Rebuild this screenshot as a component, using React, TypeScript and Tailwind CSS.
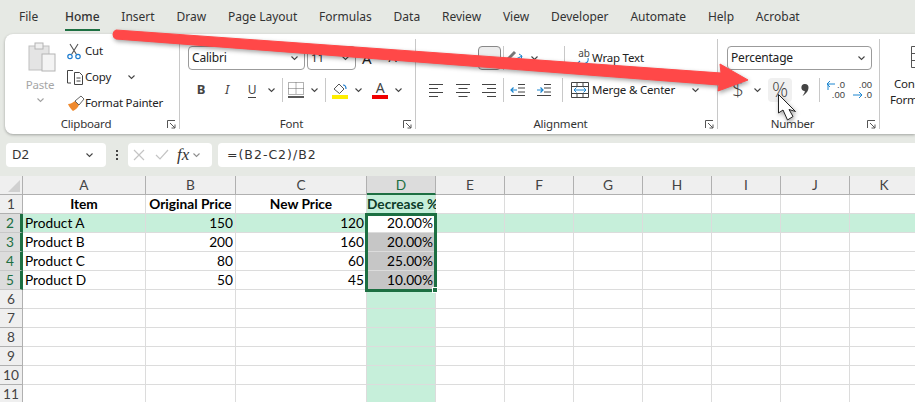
import type { ReactNode } from "react";

const tabs = ["File", "Home", "Insert", "Draw", "Page Layout", "Formulas", "Data", "Review", "View", "Developer", "Automate", "Help", "Acrobat"];
const columns = ["A", "B", "C", "D", "E", "F", "G", "H", "I", "J", "K"];
const rows: string[][] = [
  ["Item", "Original Price", "New Price", "Decrease %"],
  ["Product A", "150", "120", "20.00%"],
  ["Product B", "200", "160", "20.00%"],
  ["Product C", "80", "60", "25.00%"],
  ["Product D", "50", "45", "10.00%"],
  ...Array.from({ length: 6 }, () => ["", "", "", ""]),
];

function Chevron({ className = "" }: { className?: string }) {
  return (
    <svg width="9" height="6" viewBox="0 0 9 6" className={className}>
      <path d="M1.500 1.500 4.500 4.500 7.500 1.500" fill="none" stroke="#444" strokeWidth="1.1" />
    </svg>
  );
}

function Launcher() {
  return (
    <svg width="9" height="9" viewBox="0 0 9 9" className="mr-[3px]">
      <path d="M.5 8V.5H8M3 3l5 5M8 4.500V8H4.500" fill="none" stroke="#555" strokeWidth="1" />
    </svg>
  );
}

function Group({ label, width, children }: { label: string; width: string; children: ReactNode }) {
  return (
    <div className={`my-[5px] flex shrink-0 flex-col border-r border-[#c8c8c8] ${width}`}>
      <div className="min-h-0 flex-1">{children}</div>
      <div className="grid h-[10px] grid-cols-[1fr_auto] items-center leading-[10px] text-[#333]">
        <span className="justify-self-center">{label}</span>
        <Launcher />
      </div>
    </div>
  );
}

function Slot({ w = "w-[26px]", children }: { w?: string; children?: ReactNode }) {
  return <div className={`flex h-[24px] items-center justify-center ${w}`}>{children}</div>;
}

function Sep({ ml }: { ml: string }) {
  return <div className={`h-[24px] w-px bg-[#c8c8c8] ${ml}`} />;
}

function Lines({ kind }: { kind: "left" | "center" | "right" }) {
  const d = {
    left: "M1 1.500h14M1 5.500h9M1 9.500h14M1 13.500h9",
    center: "M1 1.500h14M3.500 5.500h9M1 9.500h14M3.500 13.500h9",
    right: "M1 1.500h14M6 5.500h9M1 9.500h14M6 13.500h9",
  }[kind];
  return (
    <svg width="16" height="15" viewBox="0 0 16 15">
      <path d={d} stroke="#444" strokeWidth="1" />
    </svg>
  );
}

function Indent({ flip }: { flip?: boolean }) {
  return (
    <svg width="16" height="14" viewBox="0 0 16 14">
      <path d="M8 1.500h7M8 5h7M8 9h7M1 12.500h14" stroke="#444" strokeWidth="1" />
      <path d={flip ? "M1 7h6M4.500 4.500 7 7l-2.500 2.500" : "M7 7H1M3.500 4.500 1 7l2.500 2.500"} fill="none" stroke="#1c86d0" strokeWidth="1.2" />
    </svg>
  );
}

// increase / decrease decimal buttons
function Decimal({ top, bottom, arrow, ml }: { top: string; bottom: string; arrow: "left" | "right"; ml: string }) {
  return (
    <div className={`flex w-[19px] flex-col font-['Liberation_Sans',sans-serif] text-[9.5px] leading-[10px] tracking-normal text-[#444] ${ml}`}>
      {arrow === "left" ? (
        <div className="flex items-center justify-between">
          <svg width="9" height="10" viewBox="0 0 9 10">
            <path d="M9 4H1M4 1 1 4l3 3M2 4v6" fill="none" stroke="#1c86d0" strokeWidth="1" />
          </svg>
          <span>{top}</span>
        </div>
      ) : (
        <span className="text-right">{top}</span>
      )}
      {arrow === "right" ? (
        <div className="flex items-center justify-between">
          <svg width="10" height="10" viewBox="0 0 10 10">
            <path d="M0 5h9M6 2l3 3-3 3" fill="none" stroke="#1c86d0" strokeWidth="1" />
          </svg>
          <span>{bottom}</span>
        </div>
      ) : (
        <span className="text-right">{bottom}</span>
      )}
    </div>
  );
}

function ClipboardGroup() {
  return (
    <Group label="Clipboard" width="w-[175px]">
      <div className="-mt-px flex pl-[17px]">
        <div className="flex w-[36px] flex-col items-center pt-[4px] text-[#a6a6a6]">
          <svg width="28" height="30" viewBox="0 0 28 30" className="ml-[3px]">
            <rect x="1" y="4" width="20" height="24" fill="#e4e4e4" stroke="#c0c0c0" />
            <rect x="7" y="1" width="8" height="6" fill="#f0f0f0" stroke="#b4b4b4" />
            <rect x="14" y="12" width="13" height="17" fill="#f4f4f4" stroke="#b4b4b4" />
          </svg>
          <span className="mt-[3px] leading-[20px]">Paste</span>
          <Chevron className="mt-[2px] opacity-50" />
        </div>
        <div className="ml-[9px] flex flex-col">
          <div className="flex h-[26px] items-center">
            <svg width="14" height="17" viewBox="0 0 14 17" className="mr-[4px]">
              <path d="M3 1l6.500 10.500M11 1 4.500 11.500" stroke="#555" strokeWidth="1.1" fill="none" />
              <circle cx="3" cy="13.500" r="2.200" fill="none" stroke="#1c7cd0" strokeWidth="1.2" />
              <circle cx="11" cy="13.500" r="2.200" fill="none" stroke="#1c7cd0" strokeWidth="1.2" />
            </svg>
            <span>Cut</span>
          </div>
          <div className="flex h-[26px] items-center">
            <svg width="18" height="17" viewBox="0 0 18 17" className="-ml-[1px] mr-[1px]">
              <path d="M5 14H1.500V1.500H7M8.500 3.500h5l3 3v9h-8z" fill="#fff" stroke="#444" strokeWidth="1" />
              <path d="M10.500 9h4M10.500 12h4" stroke="#444" />
            </svg>
            <span>Copy</span>
            <Chevron className="ml-[16px]" />
          </div>
          <div className="flex h-[26px] items-center">
            <svg width="18" height="17" viewBox="0 0 18 17">
              <path d="M1 9c3 0 5-2 7-3l4 4c-1 3-4 5-6 6-1-1-4-4-5-7z" fill="#ef8a2f" />
              <path d="M8 6l4 4 5-6-3-3z" fill="#fff" stroke="#555" strokeWidth=".9" />
            </svg>
            <span>Format Painter</span>
          </div>
        </div>
      </div>
    </Group>
  );
}

function FontGroup() {
  return (
    <Group label="Font" width="w-[236px]">
      <div className="pl-[8px] pt-[7px]">
        <div className="flex h-[24px] items-center">
          <div className="flex h-full w-[117px] items-center justify-between rounded-[4px] border border-[#9b9b9b] pl-[3px] pr-[5px] text-[12px]">
            Calibri
            <Chevron />
          </div>
          <div className="ml-[2px] flex h-full w-[49px] items-center justify-between rounded-[4px] border border-[#9b9b9b] pl-[3px] pr-[5px]">
            11
            <Chevron />
          </div>
          <span className="ml-[6px] text-[15px]">A</span>
          <span className="ml-[17px] text-[13px]">A</span>
        </div>
        <div className="mt-[8px] flex items-center">
          <Slot><b className="text-[13px] text-[#444]">B</b></Slot>
          <Slot><i className="text-[13px] text-[#444]">I</i></Slot>
          <Slot w="w-[24px]"><span className="border-b border-[#444] text-[12px] leading-[15px] text-[#444]">U</span></Slot>
          <Slot w="w-[14px]"><Chevron /></Slot>
          <Sep ml="ml-[4px]" />
          <Slot w="w-[24px]">
            <svg width="16" height="16" viewBox="0 0 16 16" className="ml-[2px]">
              <path d="M.5 .5h15v12H.5zM8 .5v12M.5 6.500h15" fill="none" stroke="#666" strokeDasharray="1 1" />
              <path d="M0 15h16" stroke="#222" strokeWidth="1.5" />
            </svg>
          </Slot>
          <Slot w="w-[14px]"><Chevron /></Slot>
          <Sep ml="ml-[4px]" />
          <Slot w="w-[25px]">
            <svg width="16" height="17" viewBox="0 0 16 17" className="ml-[3px]">
              <path d="M2 7l5-5 5 5-4.500 4.500z" fill="#fff" stroke="#555" />
              <path d="M11 3c2 0 3 2 3 4" fill="none" stroke="#1c7cd0" strokeWidth="1.2" />
              <path d="M0 15h16" stroke="#ffee00" strokeWidth="4" />
            </svg>
          </Slot>
          <Slot w="w-[14px]"><Chevron /></Slot>
          <div className="ml-[5px] flex w-[20px] flex-col items-center">
            <span className="text-[14px] leading-[14px] text-[#444]">A</span>
            <div className="h-[4px] w-[16px] bg-[#f00000]" />
          </div>
          <Slot w="w-[16px]"><Chevron /></Slot>
        </div>
      </div>
    </Group>
  );
}

function AlignmentGroup() {
  return (
    <Group label="Alignment" width="w-[302px]">
      <div className="pl-[7px] pt-[7px]">
        <div className="flex items-center">
          <Slot w="w-[26px]"><div className="h-px w-[15px] bg-[#444]" /></Slot>
          <Slot w="w-[27px]"><div className="h-px w-[15px] bg-[#444]" /></Slot>
          <Slot w="w-[26px]"><div className="h-[24px] w-[23px] rounded-[4px] border border-[#888] bg-[#ededed]" /></Slot>
          <Sep ml="ml-[1px]" />
          <Slot w="w-[22px]">
            <svg width="18" height="18" viewBox="0 0 18 18">
              <path d="M2 10 9 3" stroke="#777" strokeWidth="3" fill="none" />
              <path d="M10 10l6-3M13 5l3 2-1 3" stroke="#1c86d0" fill="none" />
            </svg>
          </Slot>
          <Slot w="w-[16px]"><Chevron /></Slot>
          <Sep ml="ml-[22px]" />
          <div className="ml-[7px] flex h-[24px] items-center">
            <div className="-mt-[2px] mr-[2px] flex w-[18px] flex-col items-end">
              <span className="text-[10px] leading-[10px] tracking-normal text-[#444]">ab</span>
              <svg width="18" height="9" viewBox="0 0 18 9">
                <path d="M16 0c1 4-2 6-6 6H5M8 3 5 6l3 3" fill="none" stroke="#1c86d0" strokeWidth="1.1" />
              </svg>
            </div>
            <span>Wrap Text</span>
          </div>
        </div>
        <div className="mt-[8px] flex items-center">
          <Slot w="w-[26px]"><Lines kind="left" /></Slot>
          <Slot w="w-[27px]"><Lines kind="center" /></Slot>
          <Slot w="w-[26px]"><Lines kind="right" /></Slot>
          <Sep ml="ml-[1px]" />
          <Slot w="w-[27px]"><Indent /></Slot>
          <Slot w="w-[26px]"><Indent flip /></Slot>
          <Sep ml="ml-[5px]" />
          <svg width="18" height="16" viewBox="0 0 18 16" className="ml-[8px] mr-[3px]">
            <path d="M.5 .5h17v15H.5zM.5 4.500h17M.5 11.500h17M6 .5v4M12 .5v4M6 11.500v4M12 11.500v4" fill="#fff" stroke="#444" />
            <path d="M3 8h12M5.500 5.500 3 8l2.500 2.500M12.500 5.500 15 8l-2.500 2.500" fill="none" stroke="#1c86d0" />
          </svg>
          <span>Merge &amp; Center</span>
          <Chevron className="ml-[16px]" />
        </div>
      </div>
    </Group>
  );
}

function NumberGroup() {
  return (
    <Group label="Number" width="w-[162px]">
      <div className="pl-[9px] pt-[7px]">
        <div className="flex h-[24px] w-[145px] items-center justify-between rounded-[4px] border border-[#9b9b9b] pl-[3px] pr-[5px] text-[12px]">
          Percentage
          <Chevron />
        </div>
        <div className="mt-[8px] flex items-center">
          <Slot w="w-[22px]"><span className="font-['Open_Sans',sans-serif] text-[21px] font-light text-[#444]">$</span></Slot>
          <Slot w="w-[16px]"><Chevron /></Slot>
          <div className="ml-[3px] flex h-[24px] w-[24px] items-center justify-center rounded-[4px] bg-[#f0f0f0] font-['Open_Sans',sans-serif] text-[20px] font-light tracking-normal text-[#444]">%</div>
          <Slot w="w-[26px]">
            <svg width="8" height="12" viewBox="0 0 8 12">
              <path d="M4 0a3.500 3.500 0 0 1 3.500 3.500C7.500 7 5 10 1.500 12 3 10 3.800 8.500 3.800 7A3.500 3.500 0 0 1 4 0z" fill="#444" />
            </svg>
          </Slot>
          <Sep ml="ml-[1px]" />
          <Decimal top=".0" bottom=".00" arrow="left" ml="ml-[6px]" />
          <Decimal top=".00" bottom=".0" arrow="right" ml="ml-[8px]" />
        </div>
      </div>
    </Group>
  );
}

function Ribbon() {
  return (
    <div className="ml-[5px] flex h-[100px] rounded-l-[8px] bg-white font-['Noto_Sans',sans-serif] text-[11.5px] tracking-[-0.2px] text-[#222] shadow-[0_1px_3px_rgba(0,0,0,0.3)]">
      <ClipboardGroup />
      <FontGroup />
      <AlignmentGroup />
      <NumberGroup />
      <div className="flex flex-col pl-[10px] pt-[12px] leading-[16px] whitespace-nowrap">
        <svg width="20" height="22" viewBox="0 0 20 22" className="mb-[8px] ml-[21px] shrink-0">
          <path d="M.5 .5h19v21H.5zM.5 7.500h19M.5 14.500h19" fill="none" stroke="#555" />
        </svg>
        <span className="pl-[4px]">Conditional</span>
        <span>Formatting</span>
      </div>
    </div>
  );
}

function FormulaBar() {
  return (
    <div className="flex h-[42px] items-center pl-[6px] font-['Noto_Sans',sans-serif]">
      <div className="flex h-[24px] w-[100px] items-center justify-between rounded-[4px] bg-white pl-[6px] pr-[12px] text-[13px] text-[#333]">
        D2
        <Chevron />
      </div>
      <div className="flex w-[22px] flex-col items-center gap-[2px]">
        <div className="size-[2px] bg-[#444]" />
        <div className="size-[2px] bg-[#444]" />
        <div className="size-[2px] bg-[#444]" />
      </div>
      <div className="flex h-[24px] w-[84px] items-center rounded-[4px] bg-white pl-[5px]">
        <svg width="12" height="12" viewBox="0 0 12 12">
          <path d="M1 1l10 10M11 1 1 11" stroke="#c4c4c4" strokeWidth="1.2" />
        </svg>
        <svg width="14" height="12" viewBox="0 0 14 12" className="ml-[10px]">
          <path d="M1 6l4 4 8-9" fill="none" stroke="#c4c4c4" strokeWidth="1.2" />
        </svg>
        <i className="ml-[8px] font-['Liberation_Serif',serif] text-[17px] text-[#333]">fx</i>
        <Chevron className="ml-[3px] opacity-60" />
      </div>
      <div className="ml-[6px] flex h-[24px] flex-1 items-center rounded-l-[4px] bg-white pl-[9px] font-['DejaVu_Sans',sans-serif] text-[12.5px] tracking-[1px] text-[#333]">
        =(B2-C2)/B2
      </div>
    </div>
  );
}

function cellClass(r: number, c: number) {
  if (c === 3 && r === 0) return "bg-[#c6efda] text-[#0c3b28]";
  if (c === 3 && r === 1) return "bg-white";
  if (c === 3 && r >= 2 && r <= 4) return "bg-[#c6c6c6]";
  if (c === 3 || r === 1) return "bg-[#c6efda]";
  return "bg-white";
}

function Sheet() {
  return (
    <div className="relative grid h-[226px] grid-cols-[23px_123px_90px_131px_69px_69px_69px_69px_69px_69px_69px_69px] grid-rows-[repeat(12,19px)] overflow-hidden font-['Lato',sans-serif] text-[13.7px] leading-[18px] text-black">
      <div className="flex items-end justify-end border-r border-b border-[#b0b0b0] bg-[#efefef] p-[2px]">
        <div className="size-0 border-b-[12px] border-l-[12px] border-b-[#d0d0d0] border-l-transparent" />
      </div>
      {columns.map((col, c) => (
        <div
          key={col}
          className={
            c === 3
              ? "border-r border-b-2 border-r-[#b0b0b0] border-b-[#1d6f42] bg-[#dcdcdc] text-center text-[#1d6f42]"
              : "border-r border-b border-[#b0b0b0] bg-[#efefef] text-center text-[#444]"
          }
        >
          {col}
        </div>
      ))}
      {rows.map((row, r) => (
        <div key={r} className="contents">
          <div
            className={
              r >= 1 && r <= 4
                ? "border-r-[3px] border-b border-r-[#1d6f42] border-b-[#c8c8c8] bg-[#dcdcdc] text-center text-[#1d6f42]"
                : "border-r border-b border-[#b0b0b0] bg-[#efefef] text-center text-[#444]"
            }
          >
            {r + 1}
          </div>
          {columns.map((col, c) => {
            const align = r === 0 ? "text-center font-bold" : c === 0 ? "pl-[2px]" : "pr-[2px] text-right";
            return (
              <div key={col} className={`border-r border-b border-[#dcdcdc] whitespace-nowrap ${align} ${cellClass(r, c)}`}>
                {row[c] ?? ""}
              </div>
            );
          })}
        </div>
      ))}
      <div className="pointer-events-none absolute inset-0 col-start-5 col-end-6 row-start-3 row-end-7 -mt-px -mr-px -mb-[2px] -ml-[2px] border-[3px] border-[#1d6f42]">
        <div className="absolute -right-[4px] -bottom-[4px] size-[6px] border border-white bg-[#1d6f42]" />
      </div>
    </div>
  );
}

function Annotations() {
  return (
    <svg width="915" height="402" viewBox="0 0 915 402" className="pointer-events-none absolute inset-0 drop-shadow-[1px_2px_2px_rgba(0,0,0,0.35)]">
      <path
        d="M116 30 721 73 720 64 748 80 718 91 719 85 116 39Q113 38 113 34.500 113 31 116 30Z"
        fill="#ff4848"
        stroke="#ff4848"
        strokeLinejoin="round"
      />
      <path
        d="M778.500 94.500V113L783 110 787.500 120 793 116.500 789 109.500 795.500 111.500Z"
        fill="#fff"
        stroke="#222"
        strokeWidth="1"
        strokeLinejoin="round"
      />
    </svg>
  );
}

export default function App() {
  return (
    <main className="relative h-[402px] w-[915px] overflow-hidden bg-[#e6e9e4]">
      <nav className="flex h-[34px] items-center gap-[21.8px] pl-[19px] font-['Noto_Sans',sans-serif] text-[12px] text-[#333]">
        {tabs.map((tab) => (
          <div key={tab} className={tab === "Home" ? "relative ml-[5px] font-medium" : ""}>
            {tab}
            {tab === "Home" && <div className="absolute inset-x-0 -bottom-[5px] h-[2px] bg-[#1d6f42]" />}
          </div>
        ))}
      </nav>
      <Ribbon />
      <FormulaBar />
      <Sheet />
      <Annotations />
    </main>
  );
}
